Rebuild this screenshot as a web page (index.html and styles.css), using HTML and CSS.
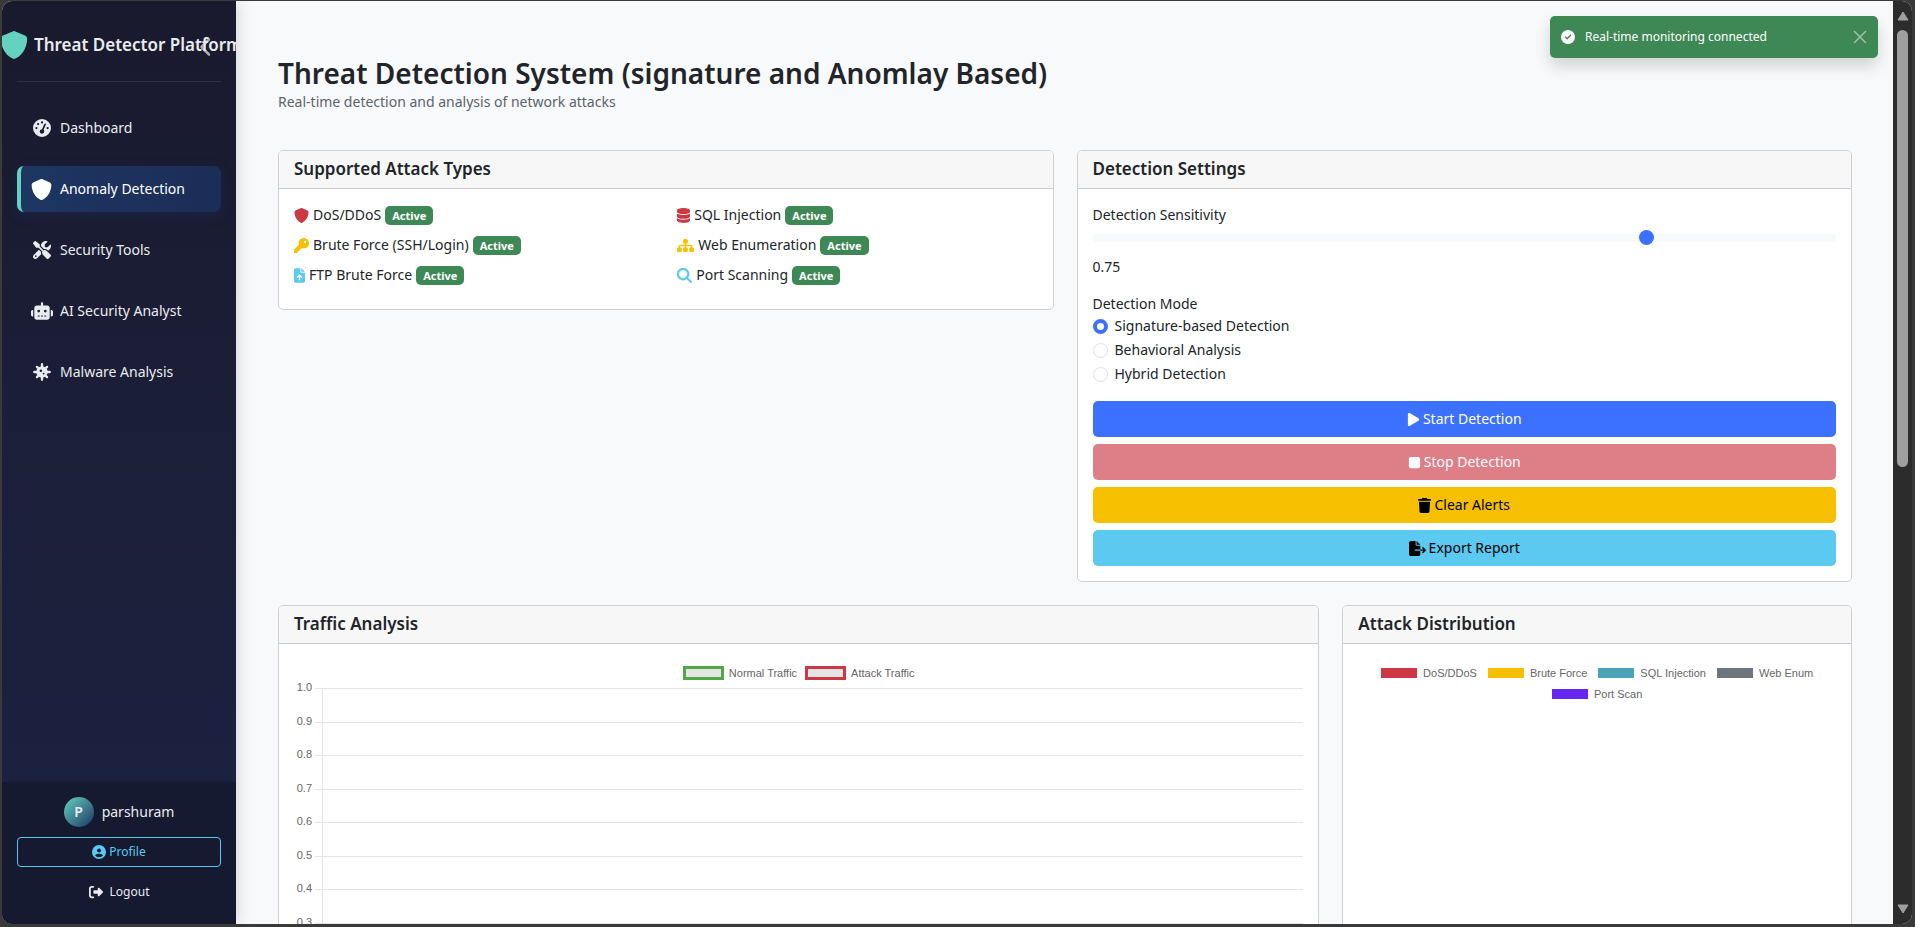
FILE: index.html
```html
<!DOCTYPE html>
<html lang="en">
<head>
<meta charset="utf-8">
<title>Threat Detector Platform</title>
<link rel="stylesheet" href="styles.css">
</head>
<body>
<svg class="sprite" aria-hidden="true">
  <symbol id="i-shield" viewBox="0 0 512 512"><path d="M256 0c4.6 0 9.2 1 13.4 2.9L457.7 82.8c22 9.3 38.4 31 38.3 57.2c-.5 99.2-41.3 280.7-213.6 363.2c-16.7 8-36.1 8-52.8 0C57.3 420.7 16.5 239.2 16 140c-.1-26.2 16.3-47.9 38.3-57.2L242.7 2.9C246.8 1 251.4 0 256 0z"/></symbol>
  <symbol id="i-chevron" viewBox="0 0 320 512"><path d="M9.4 233.4c-12.5 12.5-12.5 32.8 0 45.3l192 192c12.5 12.5 32.8 12.5 45.3 0s12.5-32.8 0-45.3L77.3 256 246.6 86.6c12.5-12.5 12.5-32.8 0-45.3s-32.8-12.5-45.3 0l-192 192z"/></symbol>
  <symbol id="i-gauge" viewBox="0 0 512 512"><path d="M0 256a256 256 0 1 1 512 0A256 256 0 1 1 0 256zM288 96a32 32 0 1 0 -64 0 32 32 0 1 0 64 0zM256 416c35.3 0 64-28.7 64-64c0-17.4-6.9-33.1-18.1-44.6L366 161.7c5.3-12.1-.2-26.3-12.3-31.6s-26.3 .2-31.6 12.3L257.9 288c-.6 0-1.3 0-1.9 0c-35.3 0-64 28.7-64 64s28.7 64 64 64zM176 144a32 32 0 1 0 -64 0 32 32 0 1 0 64 0zM96 288a32 32 0 1 0 0-64 32 32 0 1 0 0 64zm352-32a32 32 0 1 0 -64 0 32 32 0 1 0 64 0z"/></symbol>
  <symbol id="i-tools" viewBox="0 0 512 512"><path d="M78.6 5C69.1-2.4 55.6-1.5 47 7L7 47c-8.5 8.5-9.4 22-2.1 31.6l80 104c4.5 5.9 11.6 9.4 19 9.4h54.1l109 109c-14.7 29-10 65.4 14.3 89.6l112 112c12.5 12.5 32.8 12.5 45.3 0l64-64c12.5-12.5 12.5-32.8 0-45.3l-112-112c-24.2-24.2-60.6-29-89.6-14.3l-109-109V104c0-7.5-3.5-14.5-9.4-19L78.6 5zM19.9 396.1C7.2 408.8 0 426.1 0 444.1C0 481.6 30.4 512 67.9 512c18 0 35.3-7.2 48-19.9L233.7 374.3c-7.8-20.9-9-43.6-3.6-65.1l-61.7-61.7L19.9 396.1zM512 144c0-10.5-1.1-20.7-3.2-30.5c-2.4-11.2-16.1-14.1-24.2-6l-63.9 63.9c-3 3-7.1 4.7-11.3 4.7H352c-8.8 0-16-7.2-16-16V102.6c0-4.2 1.7-8.3 4.7-11.3l63.9-63.9c8.1-8.1 5.2-21.8-6-24.2C388.7 1.1 378.5 0 368 0C288.5 0 224 64.5 224 144l0 .8 85.3 85.3c36-9.1 75.8 .5 104 28.7L429 274.5c49-23 83-72.8 83-130.5zM56 432a24 24 0 1 1 48 0 24 24 0 1 1 -48 0z"/></symbol>
  <symbol id="i-robot" viewBox="0 0 640 512"><path d="M320 0c17.7 0 32 14.3 32 32V96H472c39.8 0 72 32.2 72 72V440c0 39.8-32.2 72-72 72H168c-39.8 0-72-32.2-72-72V168c0-39.8 32.2-72 72-72H288V32c0-17.7 14.3-32 32-32zM208 384c-8.8 0-16 7.2-16 16s7.2 16 16 16h32c8.8 0 16-7.2 16-16s-7.2-16-16-16H208zm96 0c-8.8 0-16 7.2-16 16s7.2 16 16 16h32c8.8 0 16-7.2 16-16s-7.2-16-16-16H304zm96 0c-8.8 0-16 7.2-16 16s7.2 16 16 16h32c8.8 0 16-7.2 16-16s-7.2-16-16-16H400zM264 256a40 40 0 1 0 -80 0 40 40 0 1 0 80 0zm152 40a40 40 0 1 0 0-80 40 40 0 1 0 0 80zM48 224H64V416H48c-26.5 0-48-21.5-48-48V272c0-26.5 21.5-48 48-48zm544 0c26.5 0 48 21.5 48 48v96c0 26.5-21.5 48-48 48H576V224h16z"/></symbol>
  <symbol id="i-virus" viewBox="0 0 512 512"><path d="M256 36V476M36 256H476M112 112L400 400M400 112L112 400" fill="none" stroke="currentColor" stroke-width="66" stroke-linecap="round"/><circle cx="256" cy="256" r="162"/><circle cx="224" cy="220" r="36" fill="#1b1c33"/><circle cx="304" cy="300" r="26" fill="#1b1c33"/></symbol>
  <symbol id="i-user" viewBox="0 0 512 512"><path d="M399 384.2C376.9 345.8 335.4 320 288 320H224c-47.4 0-88.9 25.8-111 64.2c35.2 39.2 86.2 63.8 143 63.8s107.8-24.7 143-63.8zM0 256a256 256 0 1 1 512 0A256 256 0 1 1 0 256zm256 16a72 72 0 1 0 0-144 72 72 0 1 0 0 144z"/></symbol>
  <symbol id="i-logout" viewBox="0 0 512 512"><path d="M377.9 105.9L500.7 228.7c7.2 7.2 11.3 17.1 11.3 27.3s-4.1 20.1-11.3 27.3L377.9 406.1c-6.4 6.4-15 9.9-24 9.9c-18.7 0-33.9-15.2-33.9-33.9l0-62.1-128 0c-17.7 0-32-14.3-32-32l0-64c0-17.7 14.3-32 32-32l128 0 0-62.1c0-18.7 15.2-33.9 33.9-33.9c9 0 17.6 3.6 24 9.9zM160 96L96 96c-17.7 0-32 14.3-32 32l0 256c0 17.7 14.3 32 32 32l64 0c17.7 0 32 14.3 32 32s-14.3 32-32 32l-64 0c-53 0-96-43-96-96L0 128C0 75 43 32 96 32l64 0c17.7 0 32 14.3 32 32s-14.3 32-32 32z"/></symbol>
  <symbol id="i-key" viewBox="0 0 512 512"><path d="M336 352c97.2 0 176-78.8 176-176S433.2 0 336 0S160 78.8 160 176c0 18.7 2.9 36.8 8.3 53.7L7 391c-4.5 4.5-7 10.6-7 17v80c0 13.3 10.7 24 24 24h80c13.3 0 24-10.7 24-24V448h40c13.3 0 24-10.7 24-24V384h40c6.4 0 12.5-2.5 17-7l33.3-33.3c16.9 5.4 35 8.3 53.7 8.3zM376 96a40 40 0 1 1 0 80 40 40 0 1 1 0-80z"/></symbol>
  <symbol id="i-upload" viewBox="0 0 384 512"><path d="M64 0C28.7 0 0 28.7 0 64V448c0 35.3 28.7 64 64 64H320c35.3 0 64-28.7 64-64V160H256c-17.7 0-32-14.3-32-32V0H64zM256 0V128H384L256 0zM216 408c0 13.3-10.7 24-24 24s-24-10.7-24-24V305.9l-31 31c-9.4 9.4-24.6 9.4-33.9 0s-9.4-24.6 0-33.9l72-72c9.4-9.4 24.6-9.4 33.9 0l72 72c9.4 9.4 9.4 24.6 0 33.9s-24.6 9.4-33.9 0l-31-31V408z"/></symbol>
  <symbol id="i-database" viewBox="0 0 448 512"><path d="M448 80v48c0 44.2-100.3 80-224 80S0 172.2 0 128V80C0 35.8 100.3 0 224 0S448 35.8 448 80zM393.2 214.7c20.8-7.4 39.9-16.9 54.8-28.6V288c0 44.2-100.3 80-224 80S0 332.2 0 288V186.1c14.9 11.8 34 21.2 54.8 28.6C99.7 230.7 159.5 240 224 240s124.3-9.3 169.2-25.3zM0 346.1c14.9 11.8 34 21.2 54.8 28.6C99.7 390.7 159.5 400 224 400s124.3-9.3 169.2-25.3c20.8-7.4 39.9-16.9 54.8-28.6V432c0 44.2-100.3 80-224 80S0 476.2 0 432V346.1z"/></symbol>
  <symbol id="i-sitemap" viewBox="0 0 576 512"><path d="M208 80c0-26.5 21.5-48 48-48h64c26.5 0 48 21.5 48 48v64c0 26.5-21.5 48-48 48h-8v40H464c30.9 0 56 25.1 56 56v32h8c26.5 0 48 21.5 48 48v64c0 26.5-21.5 48-48 48H464c-26.5 0-48-21.5-48-48V368c0-26.5 21.5-48 48-48h8V288c0-4.4-3.6-8-8-8H312v40h8c26.5 0 48 21.5 48 48v64c0 26.5-21.5 48-48 48H256c-26.5 0-48-21.5-48-48V368c0-26.5 21.5-48 48-48h8V280H112c-4.4 0-8 3.6-8 8v32h8c26.5 0 48 21.5 48 48v64c0 26.5-21.5 48-48 48H48c-26.5 0-48-21.5-48-48V368c0-26.5 21.5-48 48-48h8V288c0-30.9 25.1-56 56-56H264V192h-8c-26.5 0-48-21.5-48-48V80z"/></symbol>
  <symbol id="i-search" viewBox="0 0 512 512"><path d="M416 208c0 45.9-14.9 88.3-40 122.7L502.6 457.4c12.5 12.5 12.5 32.8 0 45.3s-32.8 12.5-45.3 0L330.7 376c-34.4 25.2-76.8 40-122.7 40C93.1 416 0 322.9 0 208S93.1 0 208 0S416 93.1 416 208zM208 352a144 144 0 1 0 0-288 144 144 0 1 0 0 288z" stroke="currentColor" stroke-width="14"/></symbol>
  <symbol id="i-play" viewBox="0 0 384 512"><path d="M73 39c-14.8-9.1-33.4-9.4-48.5-.9S0 62.6 0 80V432c0 17.4 9.4 33.4 24.5 41.9s33.7 8.1 48.5-.9L361 297c14.3-8.7 23-24.2 23-41s-8.7-32.2-23-41L73 39z"/></symbol>
  <symbol id="i-stop" viewBox="0 0 384 512"><path d="M0 128C0 92.7 28.7 64 64 64H320c35.3 0 64 28.7 64 64V384c0 35.3-28.7 64-64 64H64c-35.3 0-64-28.7-64-64V128z"/></symbol>
  <symbol id="i-trash" viewBox="0 0 448 512"><path d="M135.2 17.7L128 32H32C14.3 32 0 46.3 0 64S14.3 96 32 96H416c17.7 0 32-14.3 32-32s-14.3-32-32-32H320l-7.2-14.3C307.4 6.8 296.3 0 284.2 0H163.8c-12.1 0-23.2 6.8-28.6 17.7zM416 128H32L53.2 467c1.6 25.3 22.6 45 47.9 45H346.9c25.3 0 46.3-19.7 47.9-45L416 128z"/></symbol>
  <symbol id="i-export" viewBox="0 0 576 512"><path d="M0 64C0 28.7 28.7 0 64 0H224V128c0 17.7 14.3 32 32 32H384V288H216c-13.3 0-24 10.7-24 24s10.7 24 24 24H384V448c0 35.3-28.7 64-64 64H64c-35.3 0-64-28.7-64-64V64zM384 336V288H494.1l-39-39c-9.4-9.4-9.4-24.6 0-33.9s24.6-9.4 33.9 0l80 80c9.4 9.4 9.4 24.6 0 33.9l-80 80c-9.4 9.4-24.6 9.4-33.9 0s-9.4-24.6 0-33.9l39-39H384zm0-208H256V0L384 128z"/></symbol>
  <symbol id="i-check" viewBox="0 0 512 512"><path d="M256 512A256 256 0 1 0 256 0a256 256 0 1 0 0 512zM369 209L241 337c-9.4 9.4-24.6 9.4-33.9 0l-64-64c-9.4-9.4-9.4-24.6 0-33.9s24.6-9.4 33.9 0l47 47L335 175c9.4-9.4 24.6-9.4 33.9 0s9.4 24.6 0 33.9z"/></symbol>
</svg>

<div class="window">
  <aside class="sidebar">
    <div class="brand">
      <svg class="brand-icon"><use href="#i-shield"/></svg>
      <span class="brand-name">Threat Detector Platform</span>
      <button class="collapse" aria-label="Collapse sidebar"><svg><use href="#i-chevron"/></svg></button>
    </div>
    <nav class="nav">
      <a class="nav-link" href="#"><svg class="w18"><use href="#i-gauge"/></svg><span>Dashboard</span></a>
      <a class="nav-link active" href="#"><svg class="w21"><use href="#i-shield"/></svg><span>Anomaly Detection</span></a>
      <a class="nav-link" href="#"><svg class="w18"><use href="#i-tools"/></svg><span>Security Tools</span></a>
      <a class="nav-link" href="#"><svg class="w22"><use href="#i-robot"/></svg><span>AI Security Analyst</span></a>
      <a class="nav-link" href="#"><svg class="w18"><use href="#i-virus"/></svg><span>Malware Analysis</span></a>
    </nav>
    <div class="account">
      <div class="user"><span class="avatar">P</span><span>parshuram</span></div>
      <a class="profile" href="#"><svg><use href="#i-user"/></svg>Profile</a>
      <a class="logout" href="#"><svg><use href="#i-logout"/></svg>Logout</a>
    </div>
  </aside>

  <main class="main">
    <h1>Threat Detection System (signature and Anomlay Based)</h1>
    <p class="lead">Real-time detection and analysis of network attacks</p>

    <div class="row halves">
      <section class="card">
        <h2>Supported Attack Types</h2>
        <div class="card-body attacks">
          <ul>
            <li><svg class="w15 red"><use href="#i-shield"/></svg>DoS/DDoS <span class="badge">Active</span></li>
            <li><svg class="w15 yellow"><use href="#i-key"/></svg>Brute Force (SSH/Login) <span class="badge">Active</span></li>
            <li><svg class="w11 cyan"><use href="#i-upload"/></svg>FTP Brute Force <span class="badge">Active</span></li>
          </ul>
          <ul>
            <li><svg class="w13 red"><use href="#i-database"/></svg>SQL Injection <span class="badge">Active</span></li>
            <li><svg class="w17 yellow"><use href="#i-sitemap"/></svg>Web Enumeration <span class="badge">Active</span></li>
            <li><svg class="w15 cyan"><use href="#i-search"/></svg>Port Scanning <span class="badge">Active</span></li>
          </ul>
        </div>
      </section>

      <section class="card">
        <h2>Detection Settings</h2>
        <form class="card-body settings">
          <label for="sensitivity">Detection Sensitivity</label>
          <input class="range" id="sensitivity" type="range" min="0" max="1" step="0.05" value="0.75">
          <output class="value" for="sensitivity">0.75</output>
          <fieldset>
            <legend>Detection Mode</legend>
            <label class="check"><input type="radio" name="mode" checked>Signature-based Detection</label>
            <label class="check"><input type="radio" name="mode">Behavioral Analysis</label>
            <label class="check"><input type="radio" name="mode">Hybrid Detection</label>
          </fieldset>
          <div class="actions">
            <button type="button" class="btn primary"><svg class="w13"><use href="#i-play"/></svg>Start Detection</button>
            <button type="button" class="btn danger" disabled><svg class="w13"><use href="#i-stop"/></svg>Stop Detection</button>
            <button type="button" class="btn warning"><svg class="w13"><use href="#i-trash"/></svg>Clear Alerts</button>
            <button type="button" class="btn info"><svg class="w17"><use href="#i-export"/></svg>Export Report</button>
          </div>
        </form>
      </section>
    </div>

    <div class="row thirds">
      <section class="card">
        <h2>Traffic Analysis</h2>
        <div class="card-body chart">
          <ul class="legend traffic">
            <li><i class="box normal"></i>Normal Traffic</li>
            <li><i class="box attack"></i>Attack Traffic</li>
          </ul>
          <div class="plot">
            <div class="tick"><span>1.0</span><i></i></div>
            <div class="tick"><span>0.9</span><i></i></div>
            <div class="tick"><span>0.8</span><i></i></div>
            <div class="tick"><span>0.7</span><i></i></div>
            <div class="tick"><span>0.6</span><i></i></div>
            <div class="tick"><span>0.5</span><i></i></div>
            <div class="tick"><span>0.4</span><i></i></div>
            <div class="tick"><span>0.3</span><i></i></div>
          </div>
        </div>
      </section>
      <section class="card">
        <h2>Attack Distribution</h2>
        <div class="card-body chart">
          <ul class="legend types">
            <li><i class="swatch s-red"></i>DoS/DDoS</li>
            <li><i class="swatch s-yellow"></i>Brute Force</li>
            <li><i class="swatch s-teal"></i>SQL Injection</li>
            <li><i class="swatch s-gray"></i>Web Enum</li>
            <li><i class="swatch s-purple"></i>Port Scan</li>
          </ul>
        </div>
      </section>
    </div>
  </main>

  <div class="scrollbar">
    <svg class="arrow" viewBox="0 0 12 10"><path d="M6 1L11 9H1z"/></svg>
    <div class="rail"><div class="thumb" style="height: 50.5%"></div></div>
    <svg class="arrow" viewBox="0 0 12 10"><path d="M6 9L1 1H11z"/></svg>
  </div>

  <div class="toast" role="status">
    <svg class="toast-icon"><use href="#i-check"/></svg>
    <span>Real-time monitoring connected</span>
    <button class="close" aria-label="Close"><svg viewBox="0 0 14 14"><path d="M1 1L13 13M13 1L1 13"/></svg></button>
  </div>
</div>
</body>
</html>
```

FILE: styles.css
```css
* { box-sizing: border-box; }
body {
  margin: 0;
  height: 100vh;
  overflow: hidden;
  background: #3a3a3a;
  color: #212529;
  font: 14px/22px "Noto Sans", "Open Sans", sans-serif;
  padding: 1px 3px 3px 2px;
}
svg { fill: currentColor; height: 15px; flex: none; }
ul { list-style: none; margin: 0; padding: 0; }
a { color: inherit; text-decoration: none; }
button { font: inherit; cursor: pointer; }
.sprite { position: absolute; width: 0; height: 0; }
.w11 { width: 11px; }
.w13 { width: 13px; }
.w15 { width: 15px; }
.w17 { width: 17px; }
.w18 { width: 18px; }
.w21 { width: 21px; }
.w22 { width: 22px; }
.red { color: #cc3945; }
.yellow { color: #f6c000; }
.cyan { color: #5bc9f0; }

.window {
  position: relative;
  display: flex;
  height: 100%;
  overflow: hidden;
  border-radius: 10px;
  background: #f8f9fb;
}

/* Sidebar */
.sidebar {
  position: relative;
  z-index: 1;
  display: flex;
  flex-direction: column;
  flex: 0 0 234px;
  background: linear-gradient(#1a1a2e, #1b2342);
  color: #e9ecef;
  box-shadow: 2px 0 14px rgba(0, 0, 0, .14);
}
.brand {
  position: relative;
  display: flex;
  align-items: center;
  gap: 6px;
  height: 81px;
  margin: 0 15px;
  padding-top: 7px;
  border-bottom: 1px solid #2f2f43;
  font-size: 17px;
  font-weight: 600;
  white-space: nowrap;
}
.brand-icon { width: 28px; height: 28px; margin-left: -17px; color: #64d2be; }
.brand-name { width: 202px; margin-right: -17px; overflow: hidden; }
.collapse {
  position: absolute;
  right: 8px;
  top: 36px;
  display: flex;
  padding: 0;
  border: 0;
  background: none;
  color: #e9ecef;
  opacity: .7;
}
.collapse svg { width: 13px; height: 20px; }
.nav { display: flex; flex-direction: column; gap: 15px; padding: 23px 15px; flex: 1; }
.nav-link {
  display: flex;
  align-items: center;
  gap: 7px;
  height: 46px;
  padding: 0 14px;
  border-radius: 7px;
}
.nav-link svg { height: 18px; }
.nav-link .w18 { margin: 0 2px; }
.nav-link .w21 { height: 21px; margin-right: 1px; }
.nav-link.active {
  padding-left: 10px;
  border-left: 4px solid #64d2be;
  background: linear-gradient(90deg, #1d3663, #1c2d56);
  box-shadow: 0 4px 12px rgba(28, 48, 92, .35);
  color: #fff;
}
.account {
  display: flex;
  flex-direction: column;
  gap: 10px;
  padding: 15px 15px 17px;
  background: #151a30;
}
.user { display: flex; align-items: center; justify-content: center; gap: 8px; }
.avatar {
  width: 30px;
  height: 30px;
  border-radius: 50%;
  background: linear-gradient(135deg, #64d2be, #1d3663);
  font-weight: 600;
  line-height: 30px;
  text-align: center;
}
.profile, .logout {
  display: flex;
  align-items: center;
  justify-content: center;
  gap: 3px;
  height: 30px;
  border-radius: 4px;
  font-size: 12px;
}
.profile { border: 1px solid #5bc9f0; color: #5bc9f0; }
.profile svg, .logout svg { width: 14px; height: 14px; }
.logout { gap: 7px; }

/* Main */
.main { flex: 1; min-width: 0; padding: 54px 41px 0 42px; }
h1 { margin: 0; font-size: 28px; font-weight: 600; line-height: 36px; }
.lead { margin: 0 0 37px; color: #5c636a; }
.row { display: grid; column-gap: 23px; margin-bottom: 23px; align-items: start; }
.halves { grid-template-columns: 1fr 1fr; }
.thirds { grid-template-columns: 1042fr 510fr; align-items: stretch; }
.card { border: 1px solid #cfd0d2; border-radius: 5px; background: #fff; overflow: hidden; }
h2 {
  margin: 0;
  padding: 7px 15px 8px;
  border-bottom: 1px solid #cacbcc;
  background: #f7f7f7;
  font-size: 17px;
  font-weight: 600;
  line-height: 22px;
}
.card-body { padding: 15px; }
.attacks { display: grid; grid-template-columns: 1fr 1fr; column-gap: 23px; }
.attacks li { display: flex; align-items: center; gap: 4px; height: 22px; margin-bottom: 8px; }
.badge {
  padding: 0 7px;
  border-radius: 5px;
  background: #3d8854;
  color: #fff;
  font-size: 11px;
  font-weight: 700;
  line-height: 19px;
}

/* Settings */
.settings label, .value { display: block; }
.range { display: block; width: 100%; height: 22px; margin: 1px 0 7px; appearance: none; background: none; }
.range::-webkit-slider-runnable-track { height: 8px; border-radius: 8px; background: #f8f9fa; }
.range::-webkit-slider-thumb {
  width: 15px;
  height: 15px;
  margin-top: -4px;
  border-radius: 50%;
  background: #3b71fe;
  appearance: none;
}
fieldset { margin: 15px 0 0; padding: 0; border: 0; }
legend { padding: 0; }
.settings .check { display: flex; align-items: center; gap: 7px; margin-bottom: 2px; }
.check input {
  width: 15px;
  height: 15px;
  margin: 0;
  border: 1px solid #dee2e6;
  border-radius: 50%;
  background: #fff;
  appearance: none;
}
.check input:checked { border: 4px solid #3b71fe; }
.actions { display: grid; gap: 7px; margin-top: 14px; }
.btn {
  display: flex;
  align-items: center;
  justify-content: center;
  gap: 3px;
  height: 36px;
  border: 0;
  border-radius: 5px;
}
.primary { background: #3b71fe; color: #fff; }
.danger { background: #de7e87; color: #fff; }
.warning { background: #f6c000; color: #000; }
.info { background: #5bc9f0; color: #000; }

/* Charts */
.chart { font: 11px/14px "Liberation Sans", Arial, sans-serif; color: #666; padding-top: 22px; }
.legend { display: flex; flex-wrap: wrap; justify-content: center; }
.legend li { display: flex; align-items: center; }
.traffic { gap: 8px; }
.traffic li { gap: 5px; }
.box { width: 41px; height: 14px; border: 3px solid; background: #e5e5e5; }
.normal { border-color: #4fa845; }
.attack { border-color: #cc3945; }
.types { gap: 7px 11px; }
.types li { gap: 6px; }
.swatch { width: 36px; height: 10px; }
.s-red { background: #cc3945; }
.s-yellow { background: #f6c000; }
.s-teal { background: #4ba2b9; }
.s-gray { background: #6d757d; }
.s-purple { background: #6526f3; }
.plot { display: grid; grid-template-rows: repeat(8, 1fr); height: 268px; margin-top: 8px; }
.tick { display: grid; grid-template-columns: 18px 7px 1fr; column-gap: 3px; }
.tick span { margin-top: -8px; text-align: right; }
.tick i { grid-column: 2 / 4; border-top: 1px solid #e5e5e5; background: linear-gradient(#e5e5e5, #e5e5e5) 7px 0 / 1px 100% no-repeat; }

/* Scrollbar */
.scrollbar {
  display: flex;
  flex-direction: column;
  align-items: center;
  gap: 9px;
  flex: 0 0 19px;
  padding: 10px 0;
  background: #2c2c2c;
  color: #9f9f9f;
}
.arrow { width: 12px; height: 10px; stroke: currentColor; stroke-width: 1; stroke-linejoin: round; }
.rail { flex: 1; width: 11px; }
.thumb { border-radius: 6px; background: #9f9f9f; }

/* Toast */
.toast {
  position: absolute;
  top: 15px;
  right: 34px;
  display: flex;
  align-items: center;
  gap: 10px;
  width: 328px;
  height: 42px;
  padding: 0 11px;
  border-radius: 5px;
  background: #3d8854;
  box-shadow: 0 8px 16px rgba(0, 0, 0, .16);
  color: #fff;
  font-size: 12px;
}
.toast-icon { width: 14px; height: 14px; }
.close { display: flex; margin-left: auto; padding: 0; border: 0; background: none; color: #fff; opacity: .5; }
.close svg { width: 14px; height: 14px; stroke: currentColor; stroke-width: 1.5; }
```
